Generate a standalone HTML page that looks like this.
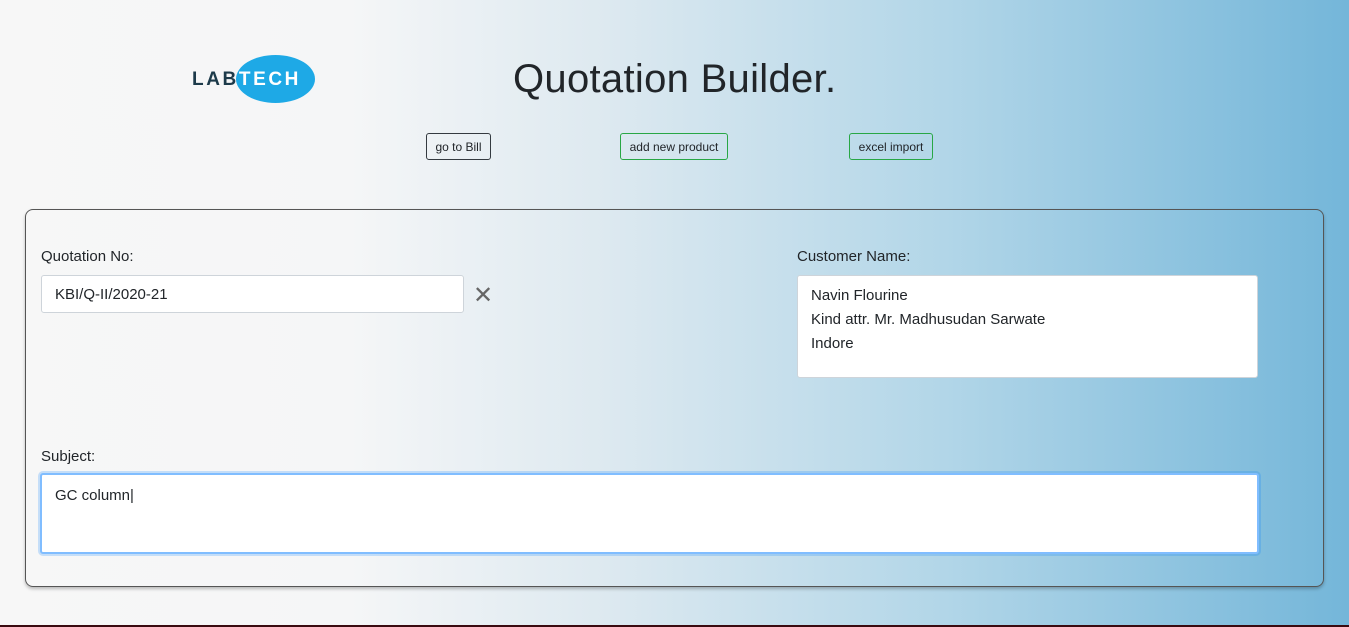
<!DOCTYPE html>
<html><head><style>
body{margin:0;width:1349px;height:627px;overflow:hidden;font-family:"Liberation Sans",sans-serif;color:#212529;
background:linear-gradient(90deg,#f7f7f7 0%,#f5f6f7 26%,#dde9f0 45%,#b2d6e8 70%,#74b6d9 100%);position:relative}
.abs{position:absolute}
h1{position:absolute;left:513px;top:56px;margin:0;font-weight:400;font-size:40px;line-height:46px;letter-spacing:0.3px}
.btn{position:absolute;top:133px;height:27px;border:1px solid;border-radius:3px;font-size:12px;line-height:27px;text-align:center;box-sizing:border-box}
.card{position:absolute;left:25px;top:209px;width:1299px;height:378px;border:1px solid #555;border-radius:8px;box-sizing:border-box;box-shadow:0 2px 3px rgba(0,0,0,.25)}
label{position:absolute;font-size:15px}
.in{position:absolute;background:#fff;border:1px solid #ced4da;border-radius:3px;box-sizing:border-box;font-size:15px;padding:0 13px}
</style></head><body>
<div class="abs" style="left:236px;top:55px;width:79px;height:48px;border-radius:50%;background:#1ea9e6"></div>
<div class="abs" style="left:192px;top:69px;font-size:19px;font-weight:bold;letter-spacing:2.6px;color:#1d3a4a">LAB<span style="color:#fff">TECH</span></div>
<h1>Quotation Builder.</h1>
<div class="btn" style="left:426px;width:65px;border-color:#343a40">go to Bill</div>
<div class="btn" style="left:620px;width:108px;border-color:#28a745">add new product</div>
<div class="btn" style="left:849px;width:84px;border-color:#28a745">excel import</div>
<div class="card"></div>
<label style="left:41px;top:248px">Quotation No:</label>
<div class="in" style="left:41px;top:275px;width:423px;height:38px;line-height:38px">KBI/Q-II/2020-21</div>
<div class="abs" style="left:473px;top:281px;font-size:24px;color:#666">✕</div>
<label style="left:797px;top:248px">Customer Name:</label>
<div class="in" style="left:797px;top:275px;width:461px;height:103px;padding-top:8px;line-height:24px">Navin Flourine<br>Kind attr. Mr. Madhusudan Sarwate<br>Indore</div>
<label style="left:41px;top:448px">Subject:</label>
<div class="in" style="left:40px;top:473px;width:1219px;height:81px;border:2px solid #80bdff;box-shadow:0 0 0 2px rgba(0,123,255,.2);padding-top:9px;line-height:24px">GC column|</div>
<div class="abs" style="left:0;top:625px;width:1349px;height:2px;background:#3a0a10"></div>
</body></html>
